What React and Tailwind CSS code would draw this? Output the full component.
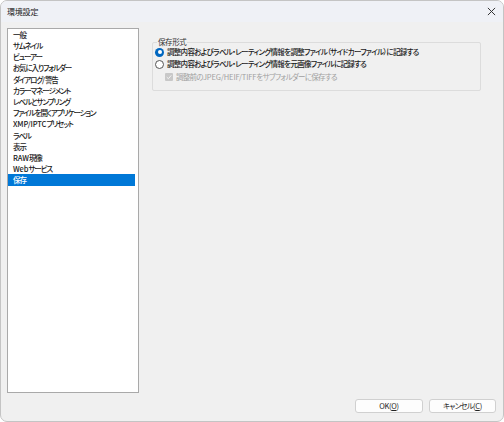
import React from 'react';

const items = [
  '一般',
  'サムネイル',
  'ビューアー',
  'お気に入りフォルダー',
  'ダイアログ/警告',
  'カラーマネージメント',
  'レベルとサンプリング',
  'ファイルを開くアプリケーション',
  'XMP/IPTCプリセット',
  'ラベル',
  '表示',
  'RAW現像',
  'Webサービス',
  '保存',
];

const font = {
  fontFamily: '"Noto Sans CJK JP", "Noto Sans", sans-serif',
};

// latin runs keep normal spacing, the rest is packed tight like Meiryo UI
function T({ children }) {
  const parts = children.split(/([A-Za-z0-9/]+)/);
  return (
    <span>
      {parts.map((p, i) =>
        /^[A-Za-z0-9/]+$/.test(p) ? (
          <span key={i} className="tracking-[-0.1px]">{p}</span>
        ) : (
          <span key={i}>{p}</span>
        )
      )}
    </span>
  );
}

function Radio({ checked }) {
  if (checked) {
    return (
      <span className="w-[9px] h-[9px] rounded-full bg-[#0067c0] flex items-center justify-center shrink-0">
        <span className="w-[4px] h-[4px] rounded-full bg-white" />
      </span>
    );
  }
  return <span className="w-[9px] h-[9px] rounded-full border border-[#555] bg-white shrink-0" />;
}

export default function App() {
  return (
    <div
      className="w-[504px] h-[422px] bg-[#f0f0f0] border border-[#c4c4c4] rounded-[7px] overflow-hidden flex flex-col text-[7.5px] font-medium text-[#1a1a1a] leading-none whitespace-nowrap [font-feature-settings:'palt'] tracking-[-0.7px]"
      style={font}
    >
      <div className="h-[21px] bg-[#eff1f6] flex items-center justify-between pl-[6px] pr-[7px] shrink-0">
        <span className="text-[8px] font-normal tracking-[-0.2px] text-[#222]">環境設定</span>
        <svg width="9" height="9" viewBox="0 0 10 10" className="text-[#333]">
          <path d="M1 1 L9 9 M9 1 L1 9" stroke="currentColor" strokeWidth="1.1" />
        </svg>
      </div>
      <div className="flex-1 flex px-[6px] pt-[6px] pb-[8px]">
        <div className="w-[132px] h-[365px] bg-white border border-[#a9a9a9] shrink-0 tracking-[-1.1px]">
          {items.map((t, i) => {
            const sel = i === items.length - 1;
            return (
              <div
                key={t}
                className={
                  sel
                    ? 'h-[11.2px] w-[127px] bg-[#0078d7] text-white flex items-center pl-[5px]'
                    : 'h-[11.2px] w-[127px] flex items-center pl-[5px]'
                }
              >
                <T>{t}</T>
              </div>
            );
          })}
        </div>
        <div className="flex-1 ml-[13px] flex flex-col">
          <div className="relative mt-[14px] w-[329px] h-[49px] border border-[#dcdcdc] rounded-[2px] pt-[3px]">
            <span className="absolute left-[4px] top-[-5px] bg-[#f0f0f0] px-[1px] text-[#333] font-normal tracking-[-0.4px]">保存形式</span>
            <div className="h-[12px] flex items-center gap-[3px] pl-[2px]">
              <Radio checked />
              <span>調整内容およびラベル・レーティング情報を調整ファイル（サイドカーファイル）に記録する</span>
            </div>
            <div className="h-[12px] flex items-center gap-[3px] pl-[2px]">
              <Radio />
              <span>調整内容およびラベル・レーティング情報を元画像ファイルに記録する</span>
            </div>
            <div className="h-[13px] flex items-center gap-[3px] pl-[12px]">
              <span className="w-[8px] h-[8px] rounded-[1px] bg-[#c8c8c8] flex items-center justify-center shrink-0">
                <svg width="6" height="6" viewBox="0 0 8 8">
                  <path d="M1 4.2 L3.2 6.3 L7 1.8" stroke="#f4f4f4" strokeWidth="1.3" fill="none" />
                </svg>
              </span>
              <span className="text-[#a0a0a0] font-normal">
                <T>調整前のJPEG/HEIF/TIFFをサブフォルダーに保存する</T>
              </span>
            </div>
          </div>
          <div className="mt-auto flex justify-end gap-[6px] pr-[1px] tracking-[-0.3px] font-normal">
            <button className="w-[68px] h-[14px] bg-[#fdfdfd] border border-[#d0d0d0] rounded-[3px] text-[7.5px] text-[#222] flex items-center justify-center">
              OK(<span className="underline">O</span>)
            </button>
            <button className="w-[67px] h-[14px] bg-[#fdfdfd] border border-[#d0d0d0] rounded-[3px] text-[7.5px] text-[#222] flex items-center justify-center">
              <span className="tracking-[-0.8px]">キャンセル</span>(<span className="underline">C</span>)
            </button>
          </div>
        </div>
      </div>
    </div>
  );
}
